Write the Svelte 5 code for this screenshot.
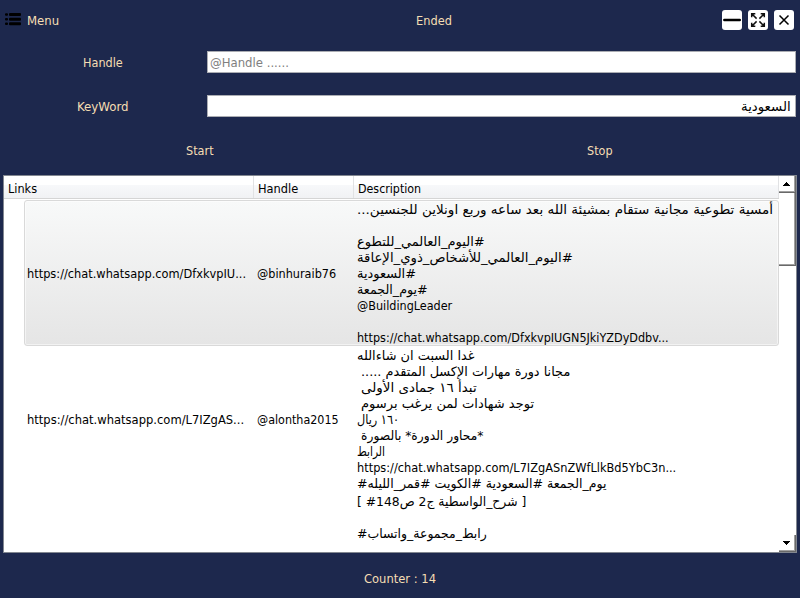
<script>
  // Scales a line horizontally so that it takes exactly the width its data gives.
  function fit(node, width) {
    const apply = () => {
      const natural = node.offsetWidth;
      if (natural) node.style.transform = `scaleX(${width / natural})`;
    };
    apply();
    document.fonts?.ready.then(apply);
  }

  const rows = [
    {
      link: ['https://chat.whatsapp.com/DfxkvpIU...', 219],
      handle: ['@binhuraib76', 79],
      selected: true,
      lines: [
        { t: 'أمسية تطوعية مجانية ستقام بمشيئة الله بعد ساعه وربع اونلاين للجنسين...', w: 416, dir: 'rtl' },
        null,
        { t: '#اليوم_العالمي_للتطوع', w: 128, dir: 'rtl' },
        { t: '#اليوم_العالمي_للأشخاص_ذوي_الإعاقة', w: 216, dir: 'rtl' },
        { t: '#السعودية', w: 58.5, dir: 'rtl' },
        { t: '#يوم_الجمعة', w: 70.5, dir: 'rtl' },
        { t: '@BuildingLeader', w: 95 },
        null,
        { t: 'https://chat.whatsapp.com/DfxkvpIUGN5JkiYZDyDdbv...', w: 312 }
      ]
    },
    {
      link: ['https://chat.whatsapp.com/L7IZgAS...', 217],
      handle: ['@alontha2015', 82],
      lines: [
        { t: 'غدا السبت ان شاءالله', w: 118, dir: 'rtl' },
        { t: 'مجانا دورة مهارات الإكسل المتقدم .....', w: 209, dir: 'rtl', gap: true },
        { t: 'تبدأ ١٦ جمادى الأولى', w: 116, dir: 'rtl', gap: true },
        { t: 'توجد شهادات لمن يرغب برسوم', w: 173, dir: 'rtl', gap: true },
        { t: '١٦٠ ريال', w: 42.5, dir: 'rtl' },
        { t: '*محاور الدورة* بالصورة', w: 123, dir: 'rtl', gap: true },
        { t: 'الرابط', w: 28, dir: 'rtl' },
        { t: 'https://chat.whatsapp.com/L7IZgASnZWfLlkBd5YbC3n...', w: 319 },
        { t: '#يوم_الجمعة #السعودية #الكويت #قمر_الليله', w: 250 },
        { t: '[ #شرح_الواسطية ج2 ص148 ]', w: 169, tall: true },
        null,
        { t: '#رابط_مجموعة_واتساب', w: 130 }
      ]
    }
  ];
</script>

{#snippet label(text, width, dir = 'ltr')}
  <span class="slot" style:width="{width}px"><span class="fit" {dir} use:fit={width}>{text}</span></span>
{/snippet}

<div class="window">
  <header>
    <div class="menu">
      <svg width="16" height="13" viewBox="0 0 16 13">
        <g fill="#000">
          <rect x="0" y="0.2" width="3" height="2.6" rx="1" /><rect x="4" y="0" width="12" height="3" rx="1" />
          <rect x="0" y="4.9" width="3" height="2.6" rx="1" /><rect x="4" y="4.7" width="12" height="3" rx="1" />
          <rect x="0" y="9.4" width="3" height="2.6" rx="1" /><rect x="4" y="9.2" width="12" height="3" rx="1" />
        </g>
      </svg>
      {@render label('Menu', 32)}
    </div>
    <div class="status">{@render label('Ended', 36)}</div>
    <div class="buttons">
      <button aria-label="Minimize"><svg width="20" height="20"><path d="M2.3 10H17.8" stroke="#000" stroke-width="2.4" stroke-linecap="round" /></svg></button>
      <button aria-label="Maximize">
        <svg width="20" height="20"><path d="M3.7 7.3V3.7H7.3M4 4l4.6 4.6M12.7 3.7h3.6v3.6M16 4l-4.6 4.6M3.7 12.7v3.6h3.6M4 16l4.6-4.6M16.3 12.7v3.6h-3.6M16 16l-4.6-4.6" fill="none" stroke="#111" stroke-width="1.5" /></svg>
      </button>
      <button aria-label="Close"><svg width="20" height="20"><path d="M5.5 5.5l9 9m0-9l-9 9" stroke="#000" stroke-width="1.5" /></svg></button>
    </div>
  </header>

  <div class="field">
    <div class="caption">{@render label('Handle', 39.5)}</div>
    <div class="input hint">{@render label('@Handle ......', 79)}</div>
  </div>
  <div class="field second">
    <div class="caption">{@render label('KeyWord', 51.5)}</div>
    <div class="input end">{@render label('السعودية', 50, 'rtl')}</div>
  </div>

  <div class="actions">
    <div>{@render label('Start', 28)}</div>
    <div>{@render label('Stop', 26)}</div>
  </div>

  <div class="table">
    <div class="content">
      <div class="head">
        <div class="h1">{@render label('Links', 29)}</div>
        <div class="h2">{@render label('Handle', 40)}</div>
        <div class="h3">{@render label('Description', 63.5)}</div>
      </div>
      {#each rows as row}
        <div class="row" class:selected={row.selected}>
          <div class="link">{@render label(row.link[0], row.link[1])}</div>
          <div class="user">{@render label(row.handle[0], row.handle[1])}</div>
          <div class="desc">
            {#each row.lines as line}
              <div class="line" class:gap={line?.gap} class:tall={line?.tall}>
                {#if line}{@render label(line.t, line.w, line.dir)}{/if}
              </div>
            {/each}
          </div>
        </div>
      {/each}
    </div>
    <div class="scroll">
      <div class="arrow up"><svg width="7" height="4" shape-rendering="crispEdges"><path d="M3 0h1v1h1v1h1v1h1v1H0V3h1V2h1V1h1z" /></svg></div>
      <div class="thumb"></div>
      <div class="track"></div>
      <div class="arrow down"><svg width="7" height="4" shape-rendering="crispEdges"><path d="M0 0h7v1H6v1H5v1H4v1H3V3H2V2H1V1H0z" /></svg></div>
    </div>
  </div>

  <footer>{@render label('Counter : 14', 72)}</footer>
</div>

<style>
  :global(body) { margin: 0; background: #1d284d; }
  .window {
    width: 800px; height: 598px; box-sizing: border-box; overflow: hidden;
    display: flex; flex-direction: column;
    background: #1d284d; color: #f5deb3;
    font: 13px/16px 'DejaVu Sans Condensed', 'DejaVu Sans', sans-serif;
    font-stretch: condensed;
  }
  .slot { display: inline-block; height: 16px; white-space: pre; vertical-align: top; direction: ltr; text-align: left; }
  .fit { display: inline-block; transform-origin: 0 50%; height: 16px; vertical-align: top; }
  header { height: 41px; display: flex; flex: none; }
  .menu { width: 100px; padding: 13px 0 0 5px; display: flex; gap: 6px; box-sizing: border-box; }
  .status { flex: 1; padding: 13px 0 0 316px; }
  .buttons { display: flex; gap: 6px; padding: 10px 6px 0 0; }
  button { width: 20px; height: 20px; padding: 0; border: 0; border-radius: 3px; background: #fff; display: block; }
  button svg { display: block; }
  .field { display: flex; flex: none; height: 22px; margin-top: 10px; padding-right: 4px; }
  .field.second { margin-top: 22px; }
  .caption { width: 205px; padding-top: 4px; text-align: center; margin-right: 2px; }
  .input { flex: 1; box-sizing: border-box; border: 1px solid #abadb3; background: #fff; padding: 3px 3px 0 2px; color: #000; display: flex; }
  .hint { color: #808080; }
  .end { justify-content: flex-end; padding-right: 4px; }
  .actions { display: flex; flex: none; height: 58px; box-sizing: border-box; padding-top: 26px; }
  .actions > div { width: 50%; text-align: center; }
  .table { flex: none; height: 378px; width: 794px; box-sizing: border-box; margin-left: 3px; border: 1px solid #828790; background: #fff; color: #000; display: flex; overflow: hidden; }
  .content { width: 775px; overflow: hidden; }
  .head { height: 23px; box-sizing: border-box; display: flex; border-bottom: 1px solid #d5d5d5; background: linear-gradient(#fff 0 40%, #f7f8fa 41%, #f1f2f4); }
  .head > div { box-sizing: border-box; padding: 5px 0 0 4px; border-right: 1px solid #e1e2e4; }
  .h1 { width: 250px; }
  .h2 { width: 100px; }
  .h3 { flex: 1; }
  .row { display: flex; margin-left: 20px; box-sizing: border-box; border: 1px solid transparent; align-items: flex-start; padding-top: 1px; }
  .selected { margin-top: 1px; height: 146px; border-color: #d9d9d9; border-radius: 3px; background: linear-gradient(#f8f9f9, #e5e5e5); box-shadow: inset 0 0 0 1px #ffffff80; }
  .link, .user { padding: 64px 0 0 2px; box-sizing: border-box; }
  .link { width: 230px; }
  .user { width: 100px; }
  .desc { flex: 1; padding-left: 2px; }
  .line { height: 16px; }
  .gap { padding-left: 4px; }
  .tall { padding-top: 2px; }
  .scroll { flex: 1; display: flex; flex-direction: column; background: #fff; }
  .arrow { flex: none; height: 17px; box-sizing: border-box; border: solid #696969; border-width: 0 1px 1px 0; box-shadow: inset -1px -1px #a0a0a0; display: flex; justify-content: center; padding: 6px 1px 0 0; }
  .thumb { flex: none; height: 73px; box-sizing: border-box; border: solid #696969; border-width: 0 1px 1px 0; box-shadow: inset -1px -1px #a0a0a0; }
  .track { flex: 1; }
  footer { padding-top: 18px; text-align: center; }
</style>
